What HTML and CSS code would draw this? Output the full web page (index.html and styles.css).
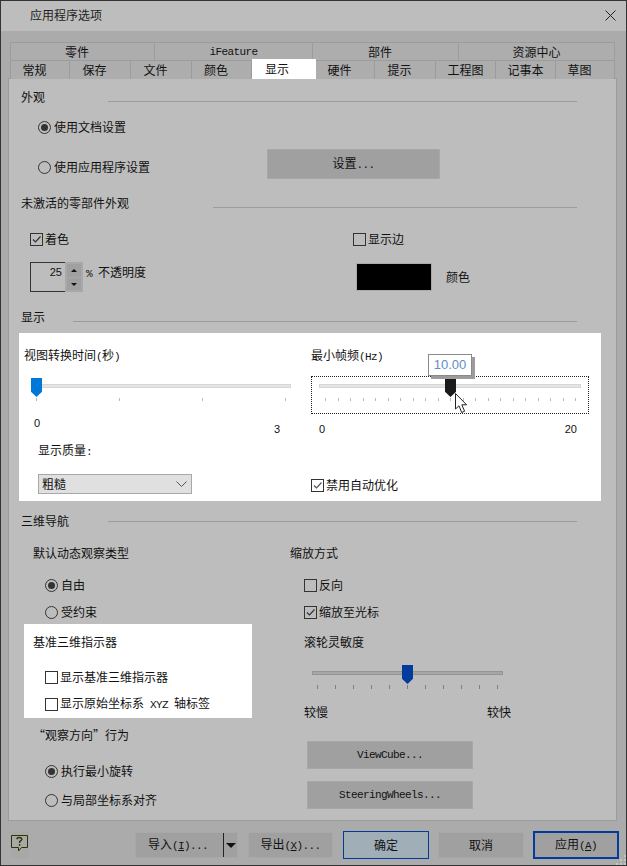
FILE: index.html
```html
<!DOCTYPE html>
<html lang="zh-CN">
<head>
<meta charset="UTF-8">
<meta name="viewport" content="width=device-width, initial-scale=1.0">
<title>应用程序选项</title>
<link rel="stylesheet" href="styles.css">
</head>
<body>

<div class="window">
  <div class="titlebar">
    <span class="title-text">应用程序选项</span>
    <svg class="close-icon" width="11" height="11" viewBox="0 0 11 11"><path d="M0.5 0.5L10.5 10.5M10.5 0.5L0.5 10.5" stroke="#222" fill="none"/></svg>
  </div>

  <div class="dialog">
    <!-- Tabs -->
    <div class="tabs tabs-top">
      <div class="tab">零件</div>
      <div class="tab tab-long"><span class="latin">iFeature</span></div>
      <div class="tab">部件</div>
      <div class="tab tab-long">资源中心</div>
    </div>
    <div class="tabs tabs-bottom">
      <div class="tab">常规</div>
      <div class="tab">保存</div>
      <div class="tab">文件</div>
      <div class="tab">颜色</div>
      <div class="tab tab-active">显示</div>
      <div class="tab">硬件</div>
      <div class="tab">提示</div>
      <div class="tab tab-long">工程图</div>
      <div class="tab tab-long">记事本</div>
      <div class="tab">草图</div>
    </div>

    <div class="panel">
      <!-- 外观 -->
      <div class="head head-first">
        <span class="head-label head-label-87">外观</span><span class="head-line"></span>
      </div>
      <div class="appearance">
        <div class="appearance-options">
          <div class="option"><span class="radio radio-on"></span><span>使用文档设置</span></div>
          <div class="option"><span class="radio"></span><span>使用应用程序设置</span></div>
        </div>
        <div class="btn btn-settings"><span>设置<span class="latin">...</span></span></div>
      </div>

      <!-- 未激活的零部件外观 -->
      <div class="head">
        <span class="head-label head-label-192">未激活的零部件外观</span><span class="head-line"></span>
      </div>
      <div class="inactive-row">
        <div class="option option-shade">
          <span class="checkbox"><svg width="11" height="11" viewBox="0 0 11 11"><path d="M2 5.5L4.5 8L9.5 2.5" stroke="#333" fill="none" stroke-width="1.2"/></svg></span>
          <span>着色</span>
        </div>
        <div class="option"><span class="checkbox"></span><span>显示边</span></div>
      </div>
      <div class="inactive-values">
        <div class="opacity">
          <div class="spinner-value">25</div>
          <div class="spinner-arrows">
            <span class="spin spin-up"></span>
            <span class="spin spin-down"></span>
          </div>
          <span class="opacity-label"><span class="latin">%&nbsp;</span>不透明度</span>
        </div>
        <div class="color-pick">
          <div class="swatch"></div>
          <span>颜色</span>
        </div>
      </div>

      <!-- 显示 -->
      <div class="head head-display">
        <span class="head-label head-label-52">显示</span><span class="head-line"></span>
      </div>
      <div class="display-box">
        <div class="display-col">
          <div class="caption">视图转换时间<span class="latin">(</span>秒<span class="latin">)</span></div>
          <div class="slider slider-time">
            <div class="track"></div>
            <div class="thumb thumb-blue"></div>
            <div class="ticks">
              <i></i><i></i><i></i><i></i>
            </div>
          </div>
          <div class="scale scale-time"><span class="num">0</span><span class="num num-low">3</span></div>
          <div class="caption quality-label">显示质量<span class="latin">:</span></div>
          <div class="select">
            <span>粗糙</span>
            <svg width="11" height="6" viewBox="0 0 11 6"><path d="M0.5 0.5L5.5 5.5L10.5 0.5" stroke="#555" fill="none"/></svg>
          </div>
        </div>
        <div class="display-col">
          <div class="caption">最小帧频<span class="latin">(Hz)</span></div>
          <div class="slider slider-fps">
            <div class="track"></div>
            <div class="thumb thumb-dark"></div>
            <div class="ticks">
              <i></i><i></i><i></i><i></i><i></i><i></i><i></i><i></i><i></i><i></i><i></i>
              <i></i><i></i><i></i><i></i><i></i><i></i><i></i><i></i><i></i><i></i>
            </div>
            <div class="tooltip">10.00</div>
            <svg class="cursor" width="14" height="21" viewBox="0 0 14 21"><path d="M0.5 0.5V16L4 12.8L6.7 19.5L9.6 18.2L6.8 11.8H11.6Z" fill="#fff" stroke="#222"/></svg>
          </div>
          <div class="scale scale-fps"><span class="num">0</span><span class="num">20</span></div>
          <div class="option option-optimize">
            <span class="checkbox"><svg width="11" height="11" viewBox="0 0 11 11"><path d="M2 5.5L4.5 8L9.5 2.5" stroke="#555" fill="none" stroke-width="1.2"/></svg></span>
            <span>禁用自动优化</span>
          </div>
        </div>
      </div>

      <!-- 三维导航 -->
      <div class="head head-nav">
        <span class="head-label head-label-87">三维导航</span><span class="head-line head-line-mid"></span>
      </div>
      <div class="nav">
        <div class="nav-left">
          <div class="caption nav-caption">默认动态观察类型</div>
          <div class="option nav-option nav-free"><span class="radio radio-on"></span><span>自由</span></div>
          <div class="option nav-option nav-next"><span class="radio"></span><span>受约束</span></div>
          <div class="triad-box">
            <div class="caption">基准三维指示器</div>
            <div class="option nav-option triad-first"><span class="checkbox"></span><span>显示基准三维指示器</span></div>
            <div class="option nav-option triad-second"><span class="checkbox"></span><span>显示原始坐标系<span class="latin">&nbsp;XYZ&nbsp;</span>轴标签</span></div>
          </div>
          <div class="caption view-caption">“观察方向”行为</div>
          <div class="option nav-option view-first"><span class="radio radio-on"></span><span>执行最小旋转</span></div>
          <div class="option nav-option nav-next-view"><span class="radio"></span><span>与局部坐标系对齐</span></div>
        </div>
        <div class="nav-right">
          <div class="caption nav-caption">缩放方式</div>
          <div class="option zoom-option nav-free"><span class="checkbox"></span><span>反向</span></div>
          <div class="option zoom-option nav-next">
            <span class="checkbox"><svg width="11" height="11" viewBox="0 0 11 11"><path d="M2 5.5L4.5 8L9.5 2.5" stroke="#333" fill="none" stroke-width="1.2"/></svg></span>
            <span>缩放至光标</span>
          </div>
          <div class="caption wheel-caption">滚轮灵敏度</div>
          <div class="slider slider-wheel">
            <div class="track track-dim"></div>
            <div class="thumb thumb-navy"></div>
            <div class="ticks ticks-dim">
              <i></i><i></i><i></i><i></i><i></i><i></i><i></i><i></i><i></i><i></i><i></i>
            </div>
          </div>
          <div class="speed"><span>较慢</span><span>较快</span></div>
          <div class="btn btn-wide btn-cube"><span class="latin">ViewCube...</span></div>
          <div class="btn btn-wide btn-wheels"><span class="latin">SteeringWheels...</span></div>
        </div>
      </div>
    </div>

    <!-- Bottom buttons -->
    <div class="footer">
      <div class="btn btn-help">
        <svg width="17" height="17" viewBox="0 0 17 17"><path d="M0.5 0.5H16.5V12.5H10.5L7.5 16V12.5H0.5Z" fill="none" stroke="#2f3300"/><path d="M6 4.2Q6 2.5 8.4 2.5Q10.8 2.5 10.8 4.3Q10.8 5.6 8.6 6.6V8M8.6 9V10.8" fill="none" stroke="#2f3300" stroke-width="1.4"/></svg>
      </div>
      <div class="btn btn-import">
        <span class="import-text">导入<span class="latin">(<u>I</u>)...</span></span>
        <span class="import-split"></span>
        <span class="import-arrow"></span>
      </div>
      <div class="btn btn-foot btn-export"><span>导出<span class="latin">(<u>X</u>)...</span></span></div>
      <div class="btn btn-foot btn-ok">确定</div>
      <div class="btn btn-foot btn-cancel">取消</div>
      <div class="btn btn-foot btn-apply"><span>应用<span class="latin">(<u>A</u>)</span></span></div>
    </div>
    <svg class="grip" width="10" height="10" viewBox="0 0 10 10"><path d="M8 0h2v2H8zM4 4h2v2H4zM8 4h2v2H8zM0 8h2v2H0zM4 8h2v2H4zM8 8h2v2H8z" fill="#c6c6c6"/></svg>
  </div>
</div>

</body>
</html>
```

FILE: styles.css
```css
* {
  box-sizing: border-box;
}
body {
  margin: 0;
  font-family: "Noto Sans CJK SC", sans-serif;
  font-size: 12px;
  line-height: 16px;
  color: #111;
  background: #333;
}
.latin {
  font-family: "Liberation Mono", monospace;
  font-size: 11px;
  letter-spacing: -0.6px;
}
.window {
  width: 627px;
  height: 866px;
  border: 1px solid #333;
  display: flex;
  flex-direction: column;
}
.titlebar {
  height: 30px;
  background-color: #bdbdbd;
  display: flex;
  align-items: center;
  justify-content: space-between;
  padding: 0 10px 2px 29px;
}
.title-text {
  color: #222;
}
.dialog {
  position: relative;
  flex-grow: 1;
  background-color: #ababab;
  padding-top: 11px;
}

/* Tabs */
.tabs {
  display: grid;
  height: 18px;
  margin-left: 9px;
  width: 605px;
}
.tabs-top {
  grid-template-columns: 145px 158px 146px 156px;
}
.tabs-bottom {
  grid-template-columns: 60px 61px 61px 60px 64px 59px 61px 60px 60px 59px;
}
.tab {
  display: flex;
  align-items: center;
  justify-content: center;
  padding-right: 11px;
  background-color: #adadad;
  border: 1px solid #9c9c9c;
  border-width: 1px 1px 0 0;
  line-height: 16px;
}
.tab:first-child {
  border-left-width: 1px;
}
.tab-long {
  padding-right: 0;
}
.tab-active {
  background-color: #fff;
  border: none;
  height: 20px;
  margin-top: -1px;
  padding-right: 14px;
  position: relative;
  z-index: 1;
}

/* Panel */
.panel {
  margin-left: 7px;
  width: 609px;
  height: 743px;
  background-color: #bdbdbd;
  border: 1px solid #9c9c9c;
}
.head {
  display: flex;
  height: 16px;
  margin-left: 12px;
  margin-right: 39px;
}
.head-first {
  margin-top: 10px;
}
.head-display {
  margin-top: 17px;
}
.head-nav {
  margin-top: 12px;
}
.head-label-87 {
  width: 87px;
}
.head-label-192 {
  width: 192px;
}
.head-label-52 {
  width: 52px;
}
.head-line {
  flex-grow: 1;
  height: 1px;
  margin-top: 12px;
  background-color: #9c9c9c;
}
.head-line-mid {
  margin-top: 8px;
}

/* Options */
.option {
  display: flex;
  align-items: center;
  height: 20px;
  white-space: nowrap;
}
.radio {
  width: 13px;
  height: 13px;
  margin-right: 3px;
  border: 1px solid #333;
  border-radius: 50%;
  display: flex;
  align-items: center;
  justify-content: center;
  flex-shrink: 0;
}
.radio-on::before {
  content: "";
  width: 7px;
  height: 7px;
  border-radius: 50%;
  background-color: #333;
}
.checkbox {
  width: 13px;
  height: 13px;
  margin-right: 2px;
  border: 1px solid #333;
  display: flex;
  flex-shrink: 0;
}
.btn {
  background-color: #a0a0a0;
  border: 1px solid #a8a8a8;
  display: flex;
  align-items: center;
  justify-content: center;
}

/* 外观 */
.appearance {
  display: flex;
  height: 90px;
}
.appearance-options {
  width: 229px;
  margin: 12px 0 0 29px;
  display: flex;
  flex-direction: column;
  gap: 20px;
}
.btn-settings {
  width: 173px;
  height: 30px;
  margin-top: 44px;
}

/* 未激活的零部件外观 */
.inactive-row {
  display: flex;
  margin: 18px 0 0 21px;
}
.option-shade {
  width: 323px;
}
.inactive-values {
  display: flex;
  height: 30px;
  margin: 13px 0 0 21px;
}
.opacity {
  display: flex;
  width: 326px;
}
.spinner-value {
  width: 35px;
  height: 30px;
  border: 1px solid #333;
  border-right: none;
  padding: 1px 3px 0 0;
  text-align: right;
  font-family: "Liberation Sans", sans-serif;
  font-size: 11px;
}
.spinner-arrows {
  width: 18px;
  height: 30px;
  padding: 2px;
  background-color: #a8a8a8;
  display: flex;
  flex-direction: column;
  gap: 1px;
}
.spin {
  flex-grow: 1;
  background-color: #a0a0a0;
  position: relative;
}
.spin::after {
  content: "";
  position: absolute;
  left: 4px;
  top: 5px;
  border: 3px solid transparent;
  border-width: 0 3.5px 3px;
  border-bottom-color: #111;
}
.spin-down::after {
  border-width: 3px 3.5px 0;
  border-top-color: #111;
  border-bottom-color: transparent;
}
.opacity-label {
  margin: 2px 0 0 3px;
}
.color-pick {
  display: flex;
  align-items: center;
  gap: 14px;
}
.swatch {
  width: 76px;
  height: 28px;
  background-color: #000;
  border: 1px solid #aaa;
}

/* 显示 */
.display-box {
  display: grid;
  grid-template-columns: 287px 1fr;
  width: 582px;
  height: 168px;
  margin: 8px 0 0 10px;
  padding: 14px 0 0 5px;
  background-color: #fff;
}
.caption {
  height: 16px;
  white-space: pre;
}
.slider {
  position: relative;
  height: 38px;
  margin-top: 13px;
  padding: 8px 0 0 8px;
}
.track {
  height: 4px;
  background-color: #e3e6e4;
  border: 1px solid #d6d8d6;
}
.track-dim {
  background-color: #a6a6a6;
  border-color: #949494;
}
.thumb {
  position: absolute;
  top: 2px;
  width: 11px;
  height: 19px;
  clip-path: polygon(0 0, 100% 0, 100% 72%, 50% 100%, 0 72%);
}
.thumb-blue {
  left: 7px;
  background-color: #0078d7;
}
.thumb-dark {
  left: 134px;
  background-color: #1a1a1a;
}
.thumb-navy {
  left: 98px;
  background-color: #003c9b;
}
.ticks {
  display: flex;
  justify-content: space-between;
  margin-top: 10px;
}
.ticks i {
  width: 1px;
  height: 3px;
  background-color: #bbb;
}
.ticks-dim i {
  height: 4px;
  background-color: #808080;
}
.slider-time {
  width: 267px;
}
.slider-time .ticks {
  margin-left: 4px;
  margin-right: 5px;
}
.slider-fps {
  width: 278px;
  outline: 1px dotted #222;
  outline-offset: -1px;
  padding-right: 8px;
}
.slider-fps .ticks {
  margin-left: 6px;
  margin-right: 5px;
}
.tooltip {
  position: absolute;
  left: 117px;
  top: -22px;
  width: 44px;
  height: 22px;
  background-color: #fff;
  border: 1px solid #8a8a8a;
  box-shadow: 3px 3px 0 #9c9c9c;
  font-family: "Liberation Sans", sans-serif;
  font-size: 13px;
  line-height: 20px;
  text-align: center;
  color: #5b8fc9;
}
.cursor {
  position: absolute;
  left: 144px;
  top: 17px;
}
.scale {
  display: flex;
  justify-content: space-between;
  height: 18px;
  margin-top: 3px;
}
.num {
  font-family: "Liberation Sans", sans-serif;
  font-size: 11px;
  line-height: 12px;
}
.num-low {
  margin-top: 6px;
}
.scale-time {
  width: 256px;
  padding-left: 10px;
}
.scale-fps {
  width: 266px;
  margin-top: 9px;
  padding-left: 8px;
}
.quality-label {
  margin: 7px 0 0 14px;
}
.select {
  display: flex;
  align-items: center;
  justify-content: space-between;
  width: 154px;
  height: 20px;
  margin: 16px 0 0 14px;
  padding: 0 4px 0 3px;
  background-color: #e0e0e0;
  border: 1px solid #a8a8a8;
}
.option-optimize {
  margin-top: 34px;
}

/* 三维导航 */
.nav {
  display: grid;
  grid-template-columns: 266px 1fr;
  margin-left: 15px;
}
.nav-caption {
  margin-top: 16px;
}
.nav-left > .caption,
.triad-box > .caption {
  margin-left: 9px;
}
.nav-option {
  margin-left: 21px;
}
.nav-free {
  margin-top: 14px;
}
.nav-next {
  margin-top: 7px;
}
.triad-box {
  width: 228px;
  height: 94px;
  margin-top: 2px;
  padding-top: 10px;
  background-color: #fff;
}
.triad-first {
  margin-top: 17px;
}
.triad-second {
  margin-top: 7px;
}
.nav-left > .view-caption {
  margin-top: 9px;
}
.view-first {
  margin-top: 18px;
}
.nav-next-view {
  margin-top: 9px;
}
.zoom-option {
  margin-left: 14px;
}
.wheel-caption {
  margin: 12px 0 0 14px;
}
.slider-wheel {
  width: 199px;
  margin-left: 14px;
}
.slider-wheel .ticks {
  margin-left: 5px;
  margin-right: 5px;
}
.speed {
  display: flex;
  justify-content: space-between;
  width: 207px;
  margin: 3px 0 0 14px;
}
.btn-wide {
  width: 166px;
  height: 28px;
  margin-left: 17px;
}
.btn-cube {
  margin-top: 21px;
}
.btn-wheels {
  margin-top: 12px;
}

/* Bottom buttons */
.footer {
  display: flex;
  padding: 11px 0 0 9px;
}
.footer .btn {
  height: 26px;
}
.footer .btn-ok,
.footer .btn-apply {
  height: 28px;
  margin-top: -1px;
}
.btn-help {
  width: 19px;
  padding-bottom: 3px;
  background-color: #a8a8a8;
}
.btn-import {
  width: 103px;
  margin-left: 106px;
  justify-content: flex-start;
  padding-left: 12px;
}
.import-text {
  width: 75px;
}
.import-split {
  width: 1px;
  height: 24px;
  background-color: #222;
}
.import-arrow {
  margin-left: 2px;
  border: 5.5px solid transparent;
  border-width: 5px 5.5px 0;
  border-top-color: #111;
}
.btn-foot {
  width: 86px;
}
.btn-export {
  width: 85px;
  margin-left: 10px;
}
.btn-ok {
  margin-left: 10px;
  background-color: #a0aeb8;
  border-color: #003c9b;
}
.btn-cancel {
  margin-left: 9px;
}
.btn-apply {
  margin-left: 9px;
  border: 2px solid #003c9b;
}
.grip {
  position: absolute;
  right: 0;
  bottom: 0;
}
```
